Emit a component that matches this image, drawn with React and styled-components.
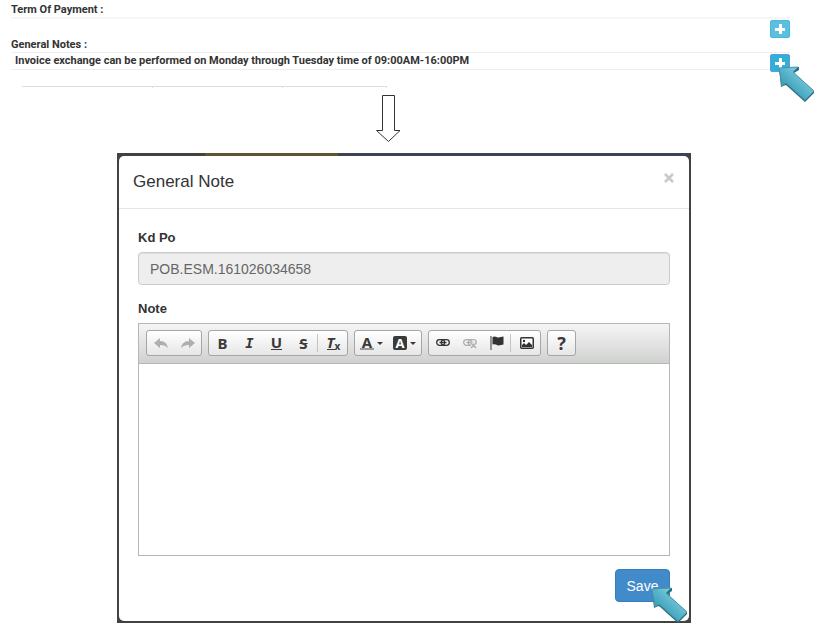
import React from "react";
import styled, { createGlobalStyle, css } from "styled-components";

const Global = createGlobalStyle`
  * { box-sizing: border-box; }
  body { margin: 0; background: #fff; color: #333; font-family: "Liberation Sans", Arial, sans-serif; }
  button { font: inherit; cursor: pointer; }
`;

const Page = styled.main`
  padding-bottom: 4px;
`;

const Notes = styled.section`
  display: flex;
  flex-direction: column;
  padding: 0 26px 0 11px;
  font: bold 11px Tahoma, Roboto, sans-serif;
`;

const NotesHeading = styled.h2`
  margin: 0;
  font: inherit;
  line-height: ${(p) => (p.$tall ? 20 : 13)}px;
  height: ${(p) => (p.$tall ? 17 : 14)}px;
`;

const NotesRow = styled.div`
  display: flex;
  justify-content: flex-end;
  align-items: flex-start;
  border-top: ${(p) => (p.$thick ? "2px solid #f6f6f6" : "1px solid #eeeeee")};
`;

const NoteText = styled.p`
  flex: 1;
  margin: 0;
  padding-left: 4px;
  line-height: 16px;
  border-bottom: 1px solid #eeeeee;
`;

const AddButton = styled.button`
  display: grid;
  place-items: center;
  width: 20px;
  height: 18px;
  margin-top: 1px;
  padding: 0;
  border: 1px solid ${(p) => (p.$active ? "#5a9be6" : "#46b8da")};
  border-radius: 2px;
  background: ${(p) => (p.$active ? "#31b0d5" : "#5bc0de")};
`;

const Anchor = styled.div`
  position: relative;
  display: flex;
`;

const Pointer = styled.svg`
  position: absolute;
  z-index: 2;
  left: ${(p) => p.$left}px;
  top: ${(p) => p.$top}px;
  width: 37px;
  height: 38px;
  pointer-events: none;
`;

const TableEdge = styled.div`
  display: grid;
  grid-template-columns: 131px 130px 104px;
  margin: 14px 0 0 22px;
`;

const TableCell = styled.div`
  height: 2px;
  border-top: 1px solid #dedede;
  border-right: 1px solid #dddddd;
`;

const DownArrow = styled.svg`
  display: block;
  width: 25px;
  height: 48px;
  margin: 7px 0 10px 376px;
`;

const Backdrop = styled.div`
  margin: 0 125px 0 117px;
  padding: 3px 2px 2px;
  background:
    linear-gradient(90deg, #45413f 0 88px, #5b562d 88px 221px, #3c4355 221px) top / 100% 3px no-repeat,
    #424242;
`;

const Dialog = styled.section`
  background: #fff;
  border-radius: 5px;
`;

const DialogHeader = styled.header`
  display: flex;
  justify-content: space-between;
  align-items: flex-start;
  height: 53px;
  padding: 14px 14px 0;
  border-bottom: 1px solid #e5e5e5;
`;

const DialogTitle = styled.h1`
  margin: 0;
  font-size: 17px;
  font-weight: 400;
  line-height: 24px;
`;

const CloseButton = styled.button`
  display: grid;
  place-items: center;
  width: 12px;
  height: 16px;
  padding: 0;
  border: 0;
  background: none;
`;

const Form = styled.form`
  display: flex;
  flex-direction: column;
  padding: 19px;
`;

const Label = styled.label`
  font: bold 13px/20px "Liberation Sans", Arial, sans-serif;
  margin-bottom: 4px;
`;

const TextField = styled.input`
  width: 100%;
  height: 33px;
  margin-bottom: 14px;
  padding: 0 11px;
  border: 1px solid #cccccc;
  border-radius: 4px;
  background: #eeeeee;
  box-shadow: inset 0 1px 1px rgba(0, 0, 0, 0.075);
  color: #666;
  font: 14px "Liberation Sans", Arial, sans-serif;
`;

const Editor = styled.div`
  display: flex;
  flex-direction: column;
  border: 1px solid #b6b6b6;
`;

const Toolbar = styled.div`
  display: flex;
  flex-wrap: wrap;
  gap: 6px;
  padding: 6px 7px 7px;
  border-bottom: 1px solid #b6b6b6;
  background: linear-gradient(#f5f5f5, #cfd1cf);
`;

const ToolGroup = styled.div`
  display: flex;
  align-items: center;
  height: 26px;
  border: 1px solid #a6a6a6;
  border-radius: 3px;
  background: linear-gradient(#ffffff, #e6e6e6);
`;

const ToolButton = styled.button`
  display: flex;
  justify-content: center;
  align-items: center;
  gap: 3px;
  width: ${(p) => (p.$wide ? 33 : 27)}px;
  height: 24px;
  padding: 0;
  border: 0;
  background: none;
  color: #3a3a3a;
  opacity: ${(p) => (p.disabled ? 0.35 : 1)};
`;

const Separator = styled.span`
  width: 1px;
  height: 18px;
  margin-right: 2px;
  background: #c4c4c4;
`;

const glyphStyles = {
  italic: css`font: italic bold 14px/18px "DejaVu Sans Mono", monospace;`,
  underline: css`
    line-height: 13px;
    border-bottom: 1px solid #3a3a3a;
  `,
  strike: css`
    font-size: 15px;
    text-decoration: line-through;
  `,
  help: css`font-size: 18px;`,
  color: css`
    width: 14px;
    line-height: 12px;
    border-bottom: 2px solid #9a9a9a;
  `,
  fill: css`
    width: 14px;
    height: 14px;
    border-radius: 2px;
    background: #3a3a3a;
    color: #fff;
    font-size: 13px;
    line-height: 14px;
  `,
};

const Glyph = styled.span`
  font: bold 15px/18px "Noto Sans", "Liberation Sans", sans-serif;
  text-align: center;
  ${(p) => glyphStyles[p.$kind]}
`;

const Clear = styled.span`
  display: flex;
  align-items: flex-end;
  font: italic bold 15px/13px "Noto Sans", sans-serif;
`;

const ClearLetter = styled.span`
  border-bottom: 1px solid #3a3a3a;
`;

const ClearMark = styled.sub`
  font: bold 10px/8px "Noto Sans", sans-serif;
`;

const Caret = styled.span`
  border: 3px solid transparent;
  border-top-color: #3a3a3a;
  border-bottom: 0;
`;

const Content = styled.textarea`
  display: block;
  width: 100%;
  height: 191px;
  padding: 12px;
  border: 0;
  outline: 0;
  resize: none;
  font: 13px "Liberation Sans", Arial, sans-serif;
`;

const Actions = styled.div`
  display: flex;
  justify-content: flex-end;
  margin-top: 13px;
`;

const SaveButton = styled.button`
  width: 55px;
  height: 33px;
  padding: 0;
  border: 1px solid #357ebd;
  border-radius: 4px;
  background: #428bca;
  color: #fff;
  font-size: 14px;
`;

const Plus = () => (
  <svg width="10" height="10" viewBox="0 0 10 10" aria-hidden="true">
    <path d="M4 0h3v4h3v3H7v3H4V7H0V4h4z" fill="#fff" />
  </svg>
);

const Cursor = ({ id, left, top }) => (
  <Pointer $left={left} $top={top} viewBox="0 0 37 38" aria-hidden="true">
    <defs>
      <linearGradient id={id} x1="0" y1="1" x2="1" y2="0">
        <stop offset="0.2" stopColor="#3797b0" />
        <stop offset="0.5" stopColor="#55b3cb" />
        <stop offset="0.8" stopColor="#8ccfdd" />
      </linearGradient>
    </defs>
    <path d="M1 3 3 22 5 21 8 20 27 37 28 36 36 28V26L16 8l5-3V2z" fill="#246f83" />
    <path d="M1 3l19-1-5 5 21 19-9 9L8 18l-4 3z" fill={`url(#${id})`} stroke="#4a96a8" strokeWidth="1" strokeLinejoin="round" />
  </Pointer>
);

const Undo = ({ flip }) => (
  <svg width="14" height="11" viewBox="0 0 14 11" aria-hidden="true">
    <path
      d="M0 5 6 0v3c5 0 7 3 8 7-2-2-4-3-8-3v3z"
      fill="#333"
      transform={flip ? "matrix(-1 0 0 1 14 0)" : undefined}
    />
  </svg>
);

const Chain = ({ broken }) => (
  <svg width="14" height="12" viewBox="0 0 14 12" fill="none" stroke="#333" aria-hidden="true">
    <rect x="0.7" y="2.700" width="8" height="5.600" rx="2.800" strokeWidth="1.300" />
    <rect x="5.300" y="2.700" width="8" height="5.600" rx="2.800" strokeWidth="1.300" />
    <path d="M3.500 5.500h7" strokeWidth="1.300" />
    {broken && <path d="m8 6 5 5m0-5-5 5" stroke="#fff" strokeWidth="3" />}
    {broken && <path d="m8 6 5 5m0-5-5 5" strokeWidth="1.500" />}
  </svg>
);

const Flag = () => (
  <svg width="14" height="14" viewBox="0 0 14 14" aria-hidden="true">
    <path d="M1 0v14" stroke="#777" strokeWidth="1.500" />
    <path d="M2.500 1c3-1.500 4 .5 6 .5 1.500 0 3-1 5-1v8c-2 0-3 1-5 1-2-.5-3-2-6-1z" fill="#333" />
  </svg>
);

const Picture = () => (
  <svg width="14" height="12" viewBox="0 0 14 12" aria-hidden="true">
    <rect x=".75" y=".75" width="12.500" height="10.500" rx="1" fill="#fff" stroke="#333" strokeWidth="1.500" />
    <path d="M2 10V8l2-2 2 2 3-3 3 3v2z" fill="#333" />
    <circle cx="4" cy="4" r="1.200" fill="#333" />
  </svg>
);

export default function App() {
  return (
    <>
      <Global />
      <Page>
        <Notes>
          <NotesHeading $tall>Term Of Payment :</NotesHeading>
          <NotesRow $thick>
            <AddButton aria-label="Add term of payment"><Plus /></AddButton>
          </NotesRow>
          <NotesHeading>General Notes :</NotesHeading>
          <NotesRow>
            <NoteText>Invoice exchange can be performed on Monday through Tuesday time of 09:00AM-16:00PM</NoteText>
            <Anchor>
              <AddButton $active aria-label="Add general note"><Plus /></AddButton>
              <Cursor id="cursor-add" left={8} top={12} />
            </Anchor>
          </NotesRow>
        </Notes>
        <TableEdge>
          <TableCell /><TableCell /><TableCell />
        </TableEdge>
        <DownArrow viewBox="0 0 25 48" aria-hidden="true">
          <path d="M6.500.5h12v35h5.500L12.500 46.500.5 35.500h6z" fill="#fff" stroke="#333" />
        </DownArrow>
        <Backdrop>
          <Dialog role="dialog" aria-labelledby="dialog-title">
            <DialogHeader>
              <DialogTitle id="dialog-title">General Note</DialogTitle>
              <CloseButton aria-label="Close">
                <svg width="10" height="10" viewBox="0 0 10 10" aria-hidden="true">
                  <path d="m1 1 8 8m0-8L1 9" stroke="#c8c8c8" strokeWidth="2.500" />
                </svg>
              </CloseButton>
            </DialogHeader>
            <Form onSubmit={(e) => e.preventDefault()}>
              <Label htmlFor="kd-po">Kd Po</Label>
              <TextField id="kd-po" readOnly defaultValue="POB.ESM.161026034658" />
              <Label htmlFor="note">Note</Label>
              <Editor>
                <Toolbar role="toolbar" aria-label="Formatting">
                  <ToolGroup>
                    <ToolButton type="button" disabled aria-label="Undo"><Undo /></ToolButton>
                    <ToolButton type="button" disabled aria-label="Redo"><Undo flip /></ToolButton>
                  </ToolGroup>
                  <ToolGroup>
                    <ToolButton type="button" aria-label="Bold"><Glyph>B</Glyph></ToolButton>
                    <ToolButton type="button" aria-label="Italic"><Glyph $kind="italic">I</Glyph></ToolButton>
                    <ToolButton type="button" aria-label="Underline"><Glyph $kind="underline">U</Glyph></ToolButton>
                    <ToolButton type="button" aria-label="Strikethrough"><Glyph $kind="strike">S</Glyph></ToolButton>
                    <Separator />
                    <ToolButton type="button" aria-label="Remove format">
                      <Clear><ClearLetter>T</ClearLetter><ClearMark>x</ClearMark></Clear>
                    </ToolButton>
                  </ToolGroup>
                  <ToolGroup>
                    <ToolButton type="button" $wide aria-label="Text color"><Glyph $kind="color">A</Glyph><Caret /></ToolButton>
                    <ToolButton type="button" $wide aria-label="Background color"><Glyph $kind="fill">A</Glyph><Caret /></ToolButton>
                  </ToolGroup>
                  <ToolGroup>
                    <ToolButton type="button" aria-label="Link"><Chain /></ToolButton>
                    <ToolButton type="button" disabled aria-label="Unlink"><Chain broken /></ToolButton>
                    <ToolButton type="button" aria-label="Anchor"><Flag /></ToolButton>
                    <Separator />
                    <ToolButton type="button" aria-label="Image"><Picture /></ToolButton>
                  </ToolGroup>
                  <ToolGroup>
                    <ToolButton type="button" aria-label="Help"><Glyph $kind="help">?</Glyph></ToolButton>
                  </ToolGroup>
                </Toolbar>
                <Content id="note" />
              </Editor>
              <Actions>
                <Anchor>
                  <SaveButton type="submit">Save</SaveButton>
                  <Cursor id="cursor-save" left={36} top={17} />
                </Anchor>
              </Actions>
            </Form>
          </Dialog>
        </Backdrop>
      </Page>
    </>
  );
}
